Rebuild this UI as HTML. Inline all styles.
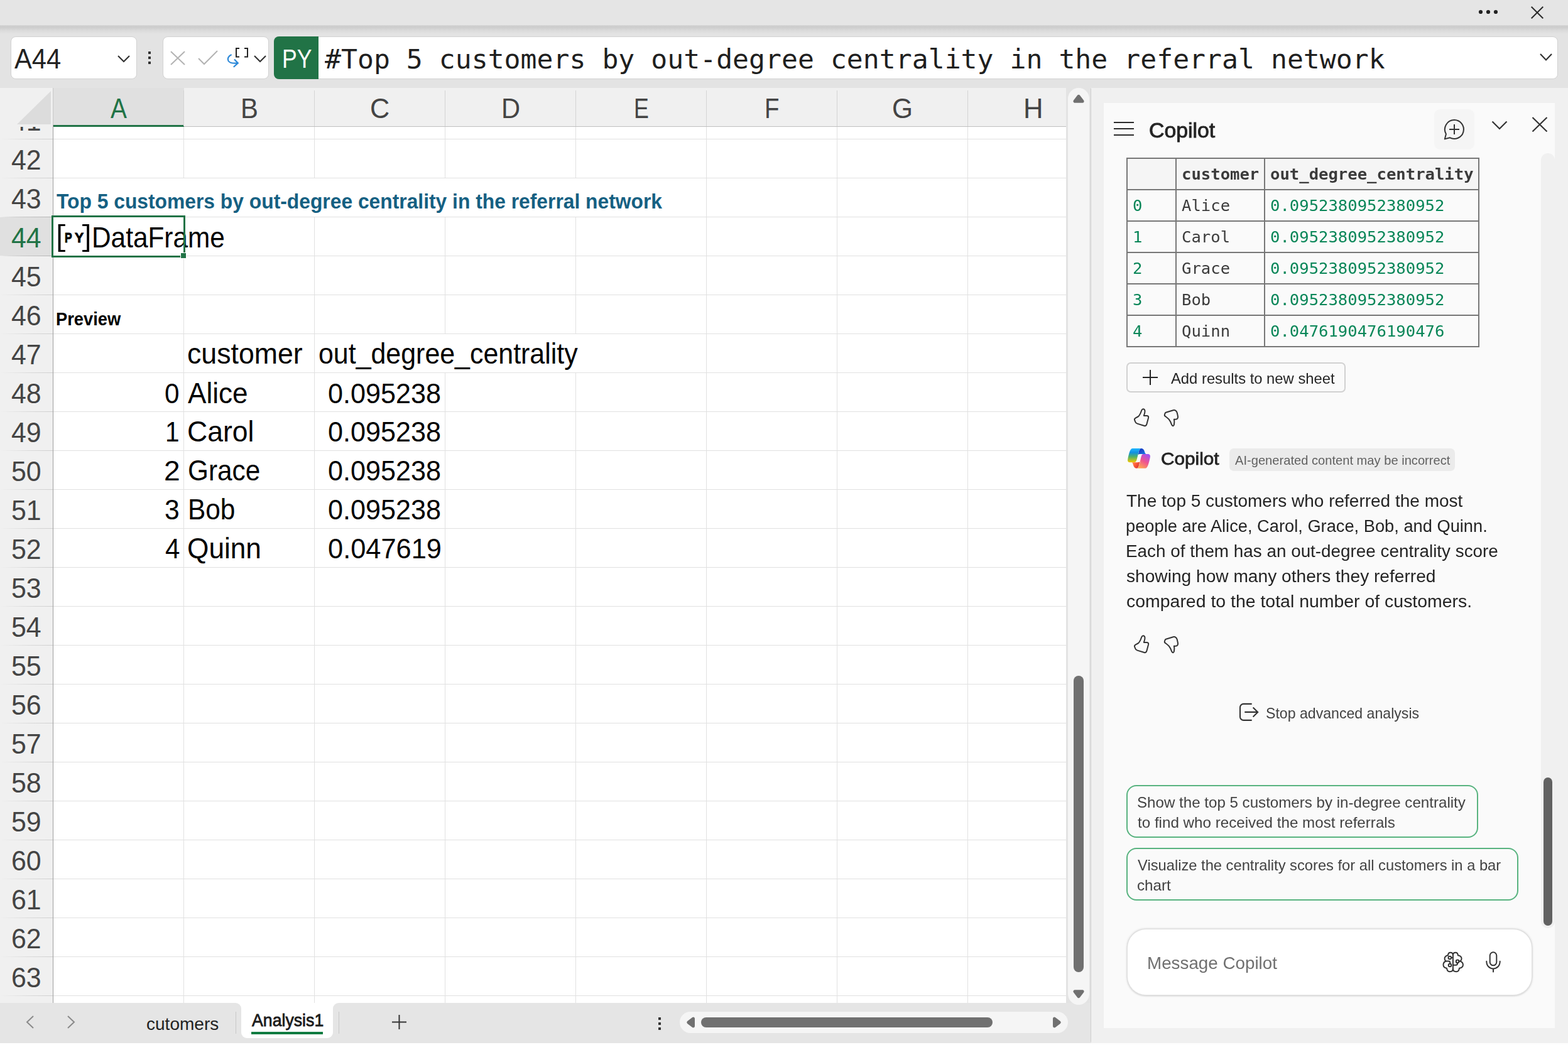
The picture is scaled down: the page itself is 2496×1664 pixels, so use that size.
<!DOCTYPE html>
<html lang="en"><head><meta charset="utf-8"><title>Excel - Copilot</title>
<style>
html,body{margin:0;padding:0}
body{width:2496px;height:1664px;position:relative;overflow:hidden;background:#f0f0f0;font-family:'Liberation Sans', sans-serif}
.t{position:absolute;white-space:pre;display:inline-block}
.r{position:absolute;box-sizing:border-box}
svg{position:absolute;overflow:visible}
</style></head><body>
<header aria-label="Title and formula bar">
<div class="r" style="left:0px;top:0px;width:2496px;height:40px;background:#e5e5e5;"></div>
<div class="r" style="left:0px;top:40px;width:2496px;height:100px;background:#e3e3e3;"></div>
<div class="r" style="left:0px;top:40px;width:2496px;height:14px;background:linear-gradient(#d8d8d8,#cccccc 14%,#cfcfcf 32%,#dbdbdb 62%,#e3e3e3);"></div>
<svg style="left:2350px;top:12px" width="40" height="14"><circle cx="7" cy="7" r="3.1" fill="#222"/><circle cx="19" cy="7" r="3.1" fill="#222"/><circle cx="31" cy="7" r="3.1" fill="#222"/></svg>
<svg style="left:2437px;top:10px" width="20" height="20"><path d="M0.7 0.7L19.3 19.3M19.3 0.7L0.7 19.3" stroke="#2b2b2b" stroke-width="2" fill="none"/></svg>
<div class="r" style="left:16.5px;top:58px;width:201px;height:67.5px;background:#fff;border:1px solid #d2d2d2;border-radius:8px"></div>
<span class="t" style="left:23.32px;transform-origin:0 50%;top:71.00px;font:400 45px/1 'Liberation Sans', sans-serif;color:#222;transform:scaleX(0.9254);">A44</span>
<svg style="left:187px;top:88px" width="20" height="12"><path d="M1 1L10 10L19 1" stroke="#333" stroke-width="2.2" fill="none"/></svg>
<div class="r" style="left:236px;top:82px;width:4.4px;height:4.2px;background:#333;"></div>
<div class="r" style="left:236px;top:90px;width:4.4px;height:4.2px;background:#333;"></div>
<div class="r" style="left:236px;top:98px;width:4.4px;height:4.2px;background:#333;"></div>
<div class="r" style="left:258.5px;top:58px;width:169px;height:67.5px;background:#fff;border:1px solid #d2d2d2;border-radius:8px"></div>
<svg style="left:271px;top:81px" width="24" height="23"><path d="M1 1L23 22M23 1L1 22" stroke="#b3b3b3" stroke-width="2" fill="none"/></svg>
<svg style="left:315px;top:80px" width="32" height="23"><path d="M1 13L10 22L31 1" stroke="#b3b3b3" stroke-width="2" fill="none"/></svg>
<svg style="left:360px;top:74px" width="40" height="36"><path d="M8.6 13C3.5 15 1.5 19.5 3.5 23C5.5 26 10 27.2 17.8 26.5M13 20.4L18.8 26.4L11.8 32.8" stroke="#2b88d8" stroke-width="2.2" fill="none"/><path d="M21 3.1H16V16.5H21M29 3.1H34V16.5H29" stroke="#222" stroke-width="2" fill="none"/></svg>
<svg style="left:404px;top:88px" width="20" height="12"><path d="M1 1L10 10L19 1" stroke="#333" stroke-width="2.2" fill="none"/></svg>
<div class="r" style="left:436px;top:58px;width:2044px;height:67.5px;background:#fff;border:1px solid #d2d2d2;border-radius:8px"></div>
<div class="r" style="left:436px;top:58px;width:71px;height:67.5px;background:#217346;border-radius:8px 0 0 8px"></div>
<span class="t" style="left:448.68px;transform-origin:0 50%;top:72.00px;font:400 43px/1 'Liberation Sans', sans-serif;color:#fff;transform:scaleX(0.8279);">PY</span>
<span class="t" style="left:517.46px;transform-origin:0 50%;top:73.00px;font:400 42.6px/1 'DejaVu Sans Mono', 'Liberation Mono', monospace;color:#1f1f1f;transform:scaleX(1.0125);">#Top 5 customers by out-degree centrality in the referral network</span>
<svg style="left:2451px;top:85px" width="20" height="12"><path d="M1 1L10 10.5L19 1" stroke="#333" stroke-width="2.2" fill="none"/></svg>
</header>
<main aria-label="Worksheet grid">
<div class="r" style="left:0px;top:140px;width:1697px;height:1457px;background:#fff;"></div>
<div class="r" style="left:0px;top:140px;width:1697px;height:62px;background:#f0f0f0;border-bottom:1px solid #bfbfbf"></div>
<svg style="left:0;top:140px" width="84" height="62"><path d="M81 5V58H27Z" fill="#dcdcdc"/></svg>
<div class="r" style="left:85px;top:140px;width:208px;height:62px;background:#e0e0e0;border-bottom:3px solid #217346"></div>
<span class="t" style="left:175.92px;transform-origin:0 50%;top:151.00px;font:400 44px/1 'Liberation Sans', sans-serif;color:#217346;transform:scaleX(0.8839);">A</span>
<span class="t" style="left:382.76px;transform-origin:0 50%;top:151.00px;font:400 44px/1 'Liberation Sans', sans-serif;color:#444;transform:scaleX(0.9518);">B</span>
<div class="r" style="left:292px;top:144px;width:1px;height:57px;background:#d4d4d4;"></div>
<span class="t" style="left:589.30px;transform-origin:0 50%;top:151.00px;font:400 44px/1 'Liberation Sans', sans-serif;color:#444;transform:scaleX(0.9831);">C</span>
<div class="r" style="left:500px;top:144px;width:1px;height:57px;background:#d4d4d4;"></div>
<span class="t" style="left:797.88px;transform-origin:0 50%;top:151.00px;font:400 44px/1 'Liberation Sans', sans-serif;color:#444;transform:scaleX(0.9476);">D</span>
<div class="r" style="left:708px;top:144px;width:1px;height:57px;background:#d4d4d4;"></div>
<span class="t" style="left:1008.97px;transform-origin:0 50%;top:151.00px;font:400 44px/1 'Liberation Sans', sans-serif;color:#444;transform:scaleX(0.8131);">E</span>
<div class="r" style="left:916px;top:144px;width:1px;height:57px;background:#d4d4d4;"></div>
<span class="t" style="left:1217.05px;transform-origin:0 50%;top:151.00px;font:400 44px/1 'Liberation Sans', sans-serif;color:#444;transform:scaleX(0.8736);">F</span>
<div class="r" style="left:1124px;top:144px;width:1px;height:57px;background:#d4d4d4;"></div>
<span class="t" style="left:1420.47px;transform-origin:0 50%;top:151.00px;font:400 44px/1 'Liberation Sans', sans-serif;color:#444;transform:scaleX(0.9640);">G</span>
<div class="r" style="left:1332px;top:144px;width:1px;height:57px;background:#d4d4d4;"></div>
<span class="t" style="left:1628.82px;transform-origin:0 50%;top:151.00px;font:400 44px/1 'Liberation Sans', sans-serif;color:#444;transform:scaleX(0.9925);">H</span>
<div class="r" style="left:1540px;top:144px;width:1px;height:57px;background:#d4d4d4;"></div>
<div class="r" style="left:0px;top:202px;width:84px;height:1395px;background:#f0f0f0;"></div>
<div class="r" style="left:0px;top:346px;width:84px;height:61px;background:#e0e0e0;"></div>
<div class="r" style="left:84px;top:140px;width:1px;height:1457px;background:#9e9e9e;"></div>
<div class="r" style="left:85px;top:221px;width:1612px;height:1px;background:#e1e1e1;"></div>
<div class="r" style="left:0px;top:221px;width:84px;height:1px;background:linear-gradient(90deg,rgba(214,214,214,0),#d8d8d8 60%,#cfcfcf);"></div>
<div class="r" style="left:85px;top:283px;width:1612px;height:1px;background:#e1e1e1;"></div>
<div class="r" style="left:0px;top:283px;width:84px;height:1px;background:linear-gradient(90deg,rgba(214,214,214,0),#d8d8d8 60%,#cfcfcf);"></div>
<div class="r" style="left:85px;top:345px;width:1612px;height:1px;background:#e1e1e1;"></div>
<div class="r" style="left:0px;top:345px;width:84px;height:1px;background:linear-gradient(90deg,rgba(214,214,214,0),#d8d8d8 60%,#cfcfcf);"></div>
<div class="r" style="left:85px;top:407px;width:1612px;height:1px;background:#e1e1e1;"></div>
<div class="r" style="left:0px;top:407px;width:84px;height:1px;background:linear-gradient(90deg,rgba(214,214,214,0),#d8d8d8 60%,#cfcfcf);"></div>
<div class="r" style="left:85px;top:469px;width:1612px;height:1px;background:#e1e1e1;"></div>
<div class="r" style="left:0px;top:469px;width:84px;height:1px;background:linear-gradient(90deg,rgba(214,214,214,0),#d8d8d8 60%,#cfcfcf);"></div>
<div class="r" style="left:85px;top:531px;width:1612px;height:1px;background:#e1e1e1;"></div>
<div class="r" style="left:0px;top:531px;width:84px;height:1px;background:linear-gradient(90deg,rgba(214,214,214,0),#d8d8d8 60%,#cfcfcf);"></div>
<div class="r" style="left:85px;top:593px;width:1612px;height:1px;background:#e1e1e1;"></div>
<div class="r" style="left:0px;top:593px;width:84px;height:1px;background:linear-gradient(90deg,rgba(214,214,214,0),#d8d8d8 60%,#cfcfcf);"></div>
<div class="r" style="left:85px;top:655px;width:1612px;height:1px;background:#e1e1e1;"></div>
<div class="r" style="left:0px;top:655px;width:84px;height:1px;background:linear-gradient(90deg,rgba(214,214,214,0),#d8d8d8 60%,#cfcfcf);"></div>
<div class="r" style="left:85px;top:717px;width:1612px;height:1px;background:#e1e1e1;"></div>
<div class="r" style="left:0px;top:717px;width:84px;height:1px;background:linear-gradient(90deg,rgba(214,214,214,0),#d8d8d8 60%,#cfcfcf);"></div>
<div class="r" style="left:85px;top:779px;width:1612px;height:1px;background:#e1e1e1;"></div>
<div class="r" style="left:0px;top:779px;width:84px;height:1px;background:linear-gradient(90deg,rgba(214,214,214,0),#d8d8d8 60%,#cfcfcf);"></div>
<div class="r" style="left:85px;top:841px;width:1612px;height:1px;background:#e1e1e1;"></div>
<div class="r" style="left:0px;top:841px;width:84px;height:1px;background:linear-gradient(90deg,rgba(214,214,214,0),#d8d8d8 60%,#cfcfcf);"></div>
<div class="r" style="left:85px;top:903px;width:1612px;height:1px;background:#e1e1e1;"></div>
<div class="r" style="left:0px;top:903px;width:84px;height:1px;background:linear-gradient(90deg,rgba(214,214,214,0),#d8d8d8 60%,#cfcfcf);"></div>
<div class="r" style="left:85px;top:965px;width:1612px;height:1px;background:#e1e1e1;"></div>
<div class="r" style="left:0px;top:965px;width:84px;height:1px;background:linear-gradient(90deg,rgba(214,214,214,0),#d8d8d8 60%,#cfcfcf);"></div>
<div class="r" style="left:85px;top:1027px;width:1612px;height:1px;background:#e1e1e1;"></div>
<div class="r" style="left:0px;top:1027px;width:84px;height:1px;background:linear-gradient(90deg,rgba(214,214,214,0),#d8d8d8 60%,#cfcfcf);"></div>
<div class="r" style="left:85px;top:1089px;width:1612px;height:1px;background:#e1e1e1;"></div>
<div class="r" style="left:0px;top:1089px;width:84px;height:1px;background:linear-gradient(90deg,rgba(214,214,214,0),#d8d8d8 60%,#cfcfcf);"></div>
<div class="r" style="left:85px;top:1151px;width:1612px;height:1px;background:#e1e1e1;"></div>
<div class="r" style="left:0px;top:1151px;width:84px;height:1px;background:linear-gradient(90deg,rgba(214,214,214,0),#d8d8d8 60%,#cfcfcf);"></div>
<div class="r" style="left:85px;top:1213px;width:1612px;height:1px;background:#e1e1e1;"></div>
<div class="r" style="left:0px;top:1213px;width:84px;height:1px;background:linear-gradient(90deg,rgba(214,214,214,0),#d8d8d8 60%,#cfcfcf);"></div>
<div class="r" style="left:85px;top:1275px;width:1612px;height:1px;background:#e1e1e1;"></div>
<div class="r" style="left:0px;top:1275px;width:84px;height:1px;background:linear-gradient(90deg,rgba(214,214,214,0),#d8d8d8 60%,#cfcfcf);"></div>
<div class="r" style="left:85px;top:1337px;width:1612px;height:1px;background:#e1e1e1;"></div>
<div class="r" style="left:0px;top:1337px;width:84px;height:1px;background:linear-gradient(90deg,rgba(214,214,214,0),#d8d8d8 60%,#cfcfcf);"></div>
<div class="r" style="left:85px;top:1399px;width:1612px;height:1px;background:#e1e1e1;"></div>
<div class="r" style="left:0px;top:1399px;width:84px;height:1px;background:linear-gradient(90deg,rgba(214,214,214,0),#d8d8d8 60%,#cfcfcf);"></div>
<div class="r" style="left:85px;top:1461px;width:1612px;height:1px;background:#e1e1e1;"></div>
<div class="r" style="left:0px;top:1461px;width:84px;height:1px;background:linear-gradient(90deg,rgba(214,214,214,0),#d8d8d8 60%,#cfcfcf);"></div>
<div class="r" style="left:85px;top:1523px;width:1612px;height:1px;background:#e1e1e1;"></div>
<div class="r" style="left:0px;top:1523px;width:84px;height:1px;background:linear-gradient(90deg,rgba(214,214,214,0),#d8d8d8 60%,#cfcfcf);"></div>
<div class="r" style="left:85px;top:1585px;width:1612px;height:1px;background:#e1e1e1;"></div>
<div class="r" style="left:0px;top:1585px;width:84px;height:1px;background:linear-gradient(90deg,rgba(214,214,214,0),#d8d8d8 60%,#cfcfcf);"></div>
<div class="r" style="left:292px;top:202px;width:1px;height:1395px;background:#e1e1e1;"></div>
<div class="r" style="left:500px;top:202px;width:1px;height:1395px;background:#e1e1e1;"></div>
<div class="r" style="left:708px;top:202px;width:1px;height:1395px;background:#e1e1e1;"></div>
<div class="r" style="left:916px;top:202px;width:1px;height:1395px;background:#e1e1e1;"></div>
<div class="r" style="left:1124px;top:202px;width:1px;height:1395px;background:#e1e1e1;"></div>
<div class="r" style="left:1332px;top:202px;width:1px;height:1395px;background:#e1e1e1;"></div>
<div class="r" style="left:1540px;top:202px;width:1px;height:1395px;background:#e1e1e1;"></div>
<div class="r" style="left:0px;top:345px;width:82px;height:1px;background:linear-gradient(90deg,rgba(190,190,190,0),#c6c6c6 45%,#b4b4b4);"></div>
<div class="r" style="left:0px;top:407px;width:82px;height:1px;background:linear-gradient(90deg,rgba(190,190,190,0),#c6c6c6 45%,#b4b4b4);"></div>
<span class="t" style="left:18.20px;transform-origin:0 50%;top:171.00px;font:400 44px/1 'Liberation Sans', sans-serif;color:#444;transform:scaleX(0.9744);">41</span>
<span class="t" style="left:18.20px;transform-origin:0 50%;top:233.00px;font:400 44px/1 'Liberation Sans', sans-serif;color:#444;transform:scaleX(0.9744);">42</span>
<span class="t" style="left:18.20px;transform-origin:0 50%;top:295.00px;font:400 44px/1 'Liberation Sans', sans-serif;color:#444;transform:scaleX(0.9744);">43</span>
<span class="t" style="left:18.20px;transform-origin:0 50%;top:357.00px;font:400 44px/1 'Liberation Sans', sans-serif;color:#217346;transform:scaleX(0.9744);">44</span>
<span class="t" style="left:18.20px;transform-origin:0 50%;top:419.00px;font:400 44px/1 'Liberation Sans', sans-serif;color:#444;transform:scaleX(0.9744);">45</span>
<span class="t" style="left:18.20px;transform-origin:0 50%;top:481.00px;font:400 44px/1 'Liberation Sans', sans-serif;color:#444;transform:scaleX(0.9744);">46</span>
<span class="t" style="left:18.20px;transform-origin:0 50%;top:543.00px;font:400 44px/1 'Liberation Sans', sans-serif;color:#444;transform:scaleX(0.9744);">47</span>
<span class="t" style="left:18.20px;transform-origin:0 50%;top:605.00px;font:400 44px/1 'Liberation Sans', sans-serif;color:#444;transform:scaleX(0.9744);">48</span>
<span class="t" style="left:18.20px;transform-origin:0 50%;top:667.00px;font:400 44px/1 'Liberation Sans', sans-serif;color:#444;transform:scaleX(0.9744);">49</span>
<span class="t" style="left:18.20px;transform-origin:0 50%;top:729.00px;font:400 44px/1 'Liberation Sans', sans-serif;color:#444;transform:scaleX(0.9744);">50</span>
<span class="t" style="left:18.20px;transform-origin:0 50%;top:791.00px;font:400 44px/1 'Liberation Sans', sans-serif;color:#444;transform:scaleX(0.9744);">51</span>
<span class="t" style="left:18.20px;transform-origin:0 50%;top:853.00px;font:400 44px/1 'Liberation Sans', sans-serif;color:#444;transform:scaleX(0.9744);">52</span>
<span class="t" style="left:18.20px;transform-origin:0 50%;top:915.00px;font:400 44px/1 'Liberation Sans', sans-serif;color:#444;transform:scaleX(0.9744);">53</span>
<span class="t" style="left:18.20px;transform-origin:0 50%;top:977.00px;font:400 44px/1 'Liberation Sans', sans-serif;color:#444;transform:scaleX(0.9744);">54</span>
<span class="t" style="left:18.20px;transform-origin:0 50%;top:1039.00px;font:400 44px/1 'Liberation Sans', sans-serif;color:#444;transform:scaleX(0.9744);">55</span>
<span class="t" style="left:18.20px;transform-origin:0 50%;top:1101.00px;font:400 44px/1 'Liberation Sans', sans-serif;color:#444;transform:scaleX(0.9744);">56</span>
<span class="t" style="left:18.20px;transform-origin:0 50%;top:1163.00px;font:400 44px/1 'Liberation Sans', sans-serif;color:#444;transform:scaleX(0.9744);">57</span>
<span class="t" style="left:18.20px;transform-origin:0 50%;top:1225.00px;font:400 44px/1 'Liberation Sans', sans-serif;color:#444;transform:scaleX(0.9744);">58</span>
<span class="t" style="left:18.20px;transform-origin:0 50%;top:1287.00px;font:400 44px/1 'Liberation Sans', sans-serif;color:#444;transform:scaleX(0.9744);">59</span>
<span class="t" style="left:18.20px;transform-origin:0 50%;top:1349.00px;font:400 44px/1 'Liberation Sans', sans-serif;color:#444;transform:scaleX(0.9744);">60</span>
<span class="t" style="left:18.20px;transform-origin:0 50%;top:1411.00px;font:400 44px/1 'Liberation Sans', sans-serif;color:#444;transform:scaleX(0.9744);">61</span>
<span class="t" style="left:18.20px;transform-origin:0 50%;top:1473.00px;font:400 44px/1 'Liberation Sans', sans-serif;color:#444;transform:scaleX(0.9744);">62</span>
<span class="t" style="left:18.20px;transform-origin:0 50%;top:1535.00px;font:400 44px/1 'Liberation Sans', sans-serif;color:#444;transform:scaleX(0.9744);">63</span>
<div class="r" style="left:0px;top:140px;width:84px;height:62px;background:#f0f0f0;"></div>
<svg style="left:0;top:140px" width="84" height="62"><path d="M81 5V58H27Z" fill="#dcdcdc"/></svg>
<div class="r" style="left:84px;top:140px;width:1px;height:59px;background:#c8c8c8;"></div>
<div class="r" style="left:85px;top:284px;width:1039px;height:61px;background:#fff;"></div>
<div class="r" style="left:501px;top:532px;width:416px;height:61px;background:#fff;"></div>
<span class="t" style="left:89.84px;transform-origin:0 50%;top:304.00px;font:700 33px/1 'Liberation Sans', sans-serif;color:#156082;transform:scaleX(0.9634);">Top 5 customers by out-degree centrality in the referral network</span>
<span class="t" style="left:146.13px;transform-origin:0 50%;top:356.00px;font:400 45.5px/1 'Liberation Sans', sans-serif;color:#000;transform:scaleX(0.9309);">DataFrame</span>
<svg style="left:0;top:0" width="160" height="410"><path d="M92.7 357.1H103.8V360H96.5V398H103.8V400.9H92.7ZM142 357.1H131.1V360H138.2V398H131.1V400.9H142Z" fill="#000"/></svg>
<span class="t" style="left:102.53px;transform-origin:0 50%;top:368.00px;font:700 22.3px/1 'Liberation Sans', sans-serif;color:#000;transform:scaleX(0.7844);-webkit-text-stroke:0.9px #000">P</span>
<span class="t" style="left:119.04px;transform-origin:0 50%;top:368.00px;font:700 22.3px/1 'Liberation Sans', sans-serif;color:#000;transform:scaleX(0.9551);-webkit-text-stroke:0.9px #000">Y</span>
<span class="t" style="left:88.97px;transform-origin:0 50%;top:493.00px;font:700 29.3px/1 'Liberation Sans', sans-serif;color:#000;transform:scaleX(0.9314);">Preview</span>
<span class="t" style="left:298.30px;transform-origin:0 50%;top:541.00px;font:400 45.5px/1 'Liberation Sans', sans-serif;color:#000;transform:scaleX(0.9819);">customer</span>
<span class="t" style="left:507.10px;transform-origin:0 50%;top:541.00px;font:400 45.5px/1 'Liberation Sans', sans-serif;color:#000;transform:scaleX(0.9430);">out_degree_centrality</span>
<span class="t" style="left:262.35px;transform-origin:0 50%;top:605.00px;font:400 44px/1 'Liberation Sans', sans-serif;color:#000;transform:scaleX(0.9598);">0</span>
<span class="t" style="left:299.01px;transform-origin:0 50%;top:604.00px;font:400 45.5px/1 'Liberation Sans', sans-serif;color:#000;transform:scaleX(0.9688);">Alice</span>
<span class="t" style="left:521.71px;transform-origin:0 50%;top:605.00px;font:400 44px/1 'Liberation Sans', sans-serif;color:#000;transform:scaleX(0.9805);">0.095238</span>
<span class="t" style="left:263.01px;transform-origin:0 50%;top:666.00px;font:400 44px/1 'Liberation Sans', sans-serif;color:#000;transform:scaleX(0.9218);">1</span>
<span class="t" style="left:298.34px;transform-origin:0 50%;top:665.00px;font:400 45.5px/1 'Liberation Sans', sans-serif;color:#000;transform:scaleX(0.9789);">Carol</span>
<span class="t" style="left:521.71px;transform-origin:0 50%;top:666.00px;font:400 44px/1 'Liberation Sans', sans-serif;color:#000;transform:scaleX(0.9805);">0.095238</span>
<span class="t" style="left:261.28px;transform-origin:0 50%;top:728.00px;font:400 44px/1 'Liberation Sans', sans-serif;color:#000;transform:scaleX(1.0469);">2</span>
<span class="t" style="left:299.07px;transform-origin:0 50%;top:727.00px;font:400 45.5px/1 'Liberation Sans', sans-serif;color:#000;transform:scaleX(0.9298);">Grace</span>
<span class="t" style="left:521.71px;transform-origin:0 50%;top:728.00px;font:400 44px/1 'Liberation Sans', sans-serif;color:#000;transform:scaleX(0.9805);">0.095238</span>
<span class="t" style="left:262.38px;transform-origin:0 50%;top:790.00px;font:400 44px/1 'Liberation Sans', sans-serif;color:#000;transform:scaleX(0.9677);">3</span>
<span class="t" style="left:299.22px;transform-origin:0 50%;top:789.00px;font:400 45.5px/1 'Liberation Sans', sans-serif;color:#000;transform:scaleX(0.9320);">Bob</span>
<span class="t" style="left:521.71px;transform-origin:0 50%;top:790.00px;font:400 44px/1 'Liberation Sans', sans-serif;color:#000;transform:scaleX(0.9805);">0.095238</span>
<span class="t" style="left:262.74px;transform-origin:0 50%;top:852.00px;font:400 44px/1 'Liberation Sans', sans-serif;color:#000;transform:scaleX(0.9556);">4</span>
<span class="t" style="left:298.21px;transform-origin:0 50%;top:851.00px;font:400 45.5px/1 'Liberation Sans', sans-serif;color:#000;transform:scaleX(0.9715);">Quinn</span>
<span class="t" style="left:521.71px;transform-origin:0 50%;top:852.00px;font:400 44px/1 'Liberation Sans', sans-serif;color:#000;transform:scaleX(0.9859);">0.047619</span>
<div class="r" style="left:82px;top:343px;width:213px;height:67px;background:transparent;border:3px solid #217346"></div>
<div class="r" style="left:287px;top:402px;width:10px;height:10px;background:#fff;"></div>
<div class="r" style="left:288px;top:403px;width:8px;height:8px;background:#217346;"></div>
</main>
<nav aria-label="Sheet tabs and scrollbars">
<div class="r" style="left:0px;top:1597px;width:1737px;height:67px;background:#e5e5e5;"></div>
<div class="r" style="left:374px;top:1597px;width:166px;height:10px;background:#fff;"></div>
<div class="r" style="left:364px;top:1597px;width:20px;height:20px;background:#e5e5e5;border-radius:0 9px 0 0"></div>
<div class="r" style="left:530px;top:1597px;width:20px;height:20px;background:#e5e5e5;border-radius:9px 0 0 0"></div>
<div class="r" style="left:384px;top:1597px;width:146px;height:56px;background:#fff;border-radius:0 0 9px 9px"></div>
<span class="t" style="left:233.31px;transform-origin:0 50%;top:1617.00px;font:400 28px/1 'Liberation Sans', sans-serif;color:#222;transform:scaleX(1.0013);">cutomers</span>
<span class="t" style="left:400.65px;transform-origin:0 50%;top:1611.00px;font:400 28px/1 'Liberation Sans', sans-serif;color:#1b1b1b;transform:scaleX(0.9534);-webkit-text-stroke:0.8px #1b1b1b">Analysis1</span>
<div class="r" style="left:400px;top:1643px;width:114px;height:4px;background:#107c41;"></div>
<div class="r" style="left:375px;top:1611px;width:1px;height:35px;background:#c8c8c8;"></div>
<div class="r" style="left:539px;top:1611px;width:1px;height:35px;background:#c8c8c8;"></div>
<svg style="left:41px;top:1617px" width="14" height="21"><path d="M12 1L2 10.5L12 20" stroke="#8a8a8a" stroke-width="2" fill="none"/></svg>
<svg style="left:106px;top:1617px" width="14" height="21"><path d="M2 1L12 10.5L2 20" stroke="#8a8a8a" stroke-width="2" fill="none"/></svg>
<svg style="left:624px;top:1616px" width="23" height="23"><path d="M11.5 0V23M0 11.5H23" stroke="#333" stroke-width="2" fill="none"/></svg>
<div class="r" style="left:1048px;top:1620px;width:4px;height:4px;background:#333;"></div>
<div class="r" style="left:1048px;top:1628px;width:4px;height:4px;background:#333;"></div>
<div class="r" style="left:1048px;top:1636px;width:4px;height:4px;background:#333;"></div>
<div class="r" style="left:1082px;top:1611px;width:618px;height:34px;background:#f5f5f5;border-radius:17px"></div>
<div class="r" style="left:1116px;top:1620px;width:464px;height:16px;background:#707070;border-radius:8px"></div>
<svg style="left:1092px;top:1619px" width="15" height="18"><path d="M11.6 3V15L3.7 9Z" fill="#707070" stroke="#707070" stroke-width="4.8" stroke-linejoin="round"/></svg>
<svg style="left:1675px;top:1619px" width="15" height="18"><path d="M3.4 3V15L11.3 9Z" fill="#707070" stroke="#707070" stroke-width="4.8" stroke-linejoin="round"/></svg>
<div class="r" style="left:1697px;top:140px;width:40px;height:1457px;background:#e3e3e3;"></div>
<div class="r" style="left:1700px;top:140px;width:34px;height:1460px;background:#f5f5f5;border-radius:17px"></div>
<div class="r" style="left:1709px;top:1076px;width:16px;height:472px;background:#707070;border-radius:8px"></div>
<svg style="left:1708px;top:150px" width="18" height="15"><path d="M2.9 11.2H15.1L9 3.3Z" fill="#707070" stroke="#707070" stroke-width="5" stroke-linejoin="round"/></svg>
<svg style="left:1708px;top:1575px" width="18" height="15"><path d="M2.9 3.8H15.1L9 11.7Z" fill="#707070" stroke="#707070" stroke-width="5" stroke-linejoin="round"/></svg>
<div class="r" style="left:1735.6px;top:141px;width:1.6px;height:1518px;background:linear-gradient(90deg,#d8d8d8,#c6c6c6);"></div>
</nav>
<aside aria-label="Copilot" style="position:absolute;left:0;top:0;width:0;height:0;will-change:transform">
<div class="r" style="left:1737px;top:140px;width:759px;height:1521px;background:#f0f0f0;"></div>
<div class="r" style="left:1757px;top:164px;width:718px;height:1473px;background:#fafafa;"></div>
<div class="r" style="left:1773px;top:194px;width:32px;height:2px;background:#2b2b2b;"></div>
<div class="r" style="left:1773px;top:204px;width:32px;height:2px;background:#2b2b2b;"></div>
<div class="r" style="left:1773px;top:214px;width:32px;height:2px;background:#2b2b2b;"></div>
<span class="t" style="left:1828.88px;transform-origin:0 50%;top:191.00px;font:400 33.5px/1 'Liberation Sans', sans-serif;color:#242424;transform:scaleX(1.0094);-webkit-text-stroke:0.9px #242424">Copilot</span>
<div class="r" style="left:2283px;top:174px;width:64px;height:64px;background:#f5f5f5;border-radius:9px"></div>
<svg style="left:2283px;top:174px" width="64" height="64"><path d="M32 17A15 15 0 1 1 24.8 45.2L16.8 47.4L18.9 39.4A15 15 0 0 1 32 17Z" stroke="#333" stroke-width="2" fill="none" stroke-linejoin="round"/><path d="M24 32H40M32 24V40" stroke="#333" stroke-width="2" fill="none"/></svg>
<svg style="left:2374px;top:192px" width="26" height="16"><path d="M1.5 1.5L13 13L24.5 1.5" stroke="#333" stroke-width="2.2" fill="none"/></svg>
<svg style="left:2438px;top:186px" width="26" height="25"><path d="M1.5 1L24.5 23.5M24.5 1L1.5 23.5" stroke="#333" stroke-width="2.2" fill="none"/></svg>
<div class="r" style="left:1793px;top:251px;width:562px;height:302px;background:#777;"></div>
<div class="r" style="left:1795px;top:253px;width:76px;height:48px;background:#f5f5f5;"></div>
<div class="r" style="left:1873px;top:253px;width:139px;height:48px;background:#f5f5f5;"></div>
<div class="r" style="left:2014px;top:253px;width:339px;height:48px;background:#f5f5f5;"></div>
<div class="r" style="left:1795px;top:303px;width:76px;height:48px;background:#fafafa;"></div>
<div class="r" style="left:1873px;top:303px;width:139px;height:48px;background:#fafafa;"></div>
<div class="r" style="left:2014px;top:303px;width:339px;height:48px;background:#fafafa;"></div>
<div class="r" style="left:1795px;top:353px;width:76px;height:48px;background:#fafafa;"></div>
<div class="r" style="left:1873px;top:353px;width:139px;height:48px;background:#fafafa;"></div>
<div class="r" style="left:2014px;top:353px;width:339px;height:48px;background:#fafafa;"></div>
<div class="r" style="left:1795px;top:403px;width:76px;height:48px;background:#fafafa;"></div>
<div class="r" style="left:1873px;top:403px;width:139px;height:48px;background:#fafafa;"></div>
<div class="r" style="left:2014px;top:403px;width:339px;height:48px;background:#fafafa;"></div>
<div class="r" style="left:1795px;top:453px;width:76px;height:48px;background:#fafafa;"></div>
<div class="r" style="left:1873px;top:453px;width:139px;height:48px;background:#fafafa;"></div>
<div class="r" style="left:2014px;top:453px;width:339px;height:48px;background:#fafafa;"></div>
<div class="r" style="left:1795px;top:503px;width:76px;height:48px;background:#fafafa;"></div>
<div class="r" style="left:1873px;top:503px;width:139px;height:48px;background:#fafafa;"></div>
<div class="r" style="left:2014px;top:503px;width:339px;height:48px;background:#fafafa;"></div>
<span class="t" style="left:1881.00px;transform-origin:0 50%;top:265.00px;font:700 25.6px/1 'DejaVu Sans Mono', 'Liberation Mono', monospace;color:#3b3b3b;">customer</span>
<span class="t" style="left:2022.00px;transform-origin:0 50%;top:265.00px;font:700 25.6px/1 'DejaVu Sans Mono', 'Liberation Mono', monospace;color:#3b3b3b;">out_degree_centrality</span>
<span class="t" style="left:1803.00px;transform-origin:0 50%;top:315.00px;font:400 25.6px/1 'DejaVu Sans Mono', 'Liberation Mono', monospace;color:#098658;">0</span>
<span class="t" style="left:1881.00px;transform-origin:0 50%;top:315.00px;font:400 25.6px/1 'DejaVu Sans Mono', 'Liberation Mono', monospace;color:#3b3b3b;">Alice</span>
<span class="t" style="left:2022.00px;transform-origin:0 50%;top:315.00px;font:400 25.6px/1 'DejaVu Sans Mono', 'Liberation Mono', monospace;color:#098658;">0.0952380952380952</span>
<span class="t" style="left:1803.00px;transform-origin:0 50%;top:365.00px;font:400 25.6px/1 'DejaVu Sans Mono', 'Liberation Mono', monospace;color:#098658;">1</span>
<span class="t" style="left:1881.00px;transform-origin:0 50%;top:365.00px;font:400 25.6px/1 'DejaVu Sans Mono', 'Liberation Mono', monospace;color:#3b3b3b;">Carol</span>
<span class="t" style="left:2022.00px;transform-origin:0 50%;top:365.00px;font:400 25.6px/1 'DejaVu Sans Mono', 'Liberation Mono', monospace;color:#098658;">0.0952380952380952</span>
<span class="t" style="left:1803.00px;transform-origin:0 50%;top:415.00px;font:400 25.6px/1 'DejaVu Sans Mono', 'Liberation Mono', monospace;color:#098658;">2</span>
<span class="t" style="left:1881.00px;transform-origin:0 50%;top:415.00px;font:400 25.6px/1 'DejaVu Sans Mono', 'Liberation Mono', monospace;color:#3b3b3b;">Grace</span>
<span class="t" style="left:2022.00px;transform-origin:0 50%;top:415.00px;font:400 25.6px/1 'DejaVu Sans Mono', 'Liberation Mono', monospace;color:#098658;">0.0952380952380952</span>
<span class="t" style="left:1803.00px;transform-origin:0 50%;top:465.00px;font:400 25.6px/1 'DejaVu Sans Mono', 'Liberation Mono', monospace;color:#098658;">3</span>
<span class="t" style="left:1881.00px;transform-origin:0 50%;top:465.00px;font:400 25.6px/1 'DejaVu Sans Mono', 'Liberation Mono', monospace;color:#3b3b3b;">Bob</span>
<span class="t" style="left:2022.00px;transform-origin:0 50%;top:465.00px;font:400 25.6px/1 'DejaVu Sans Mono', 'Liberation Mono', monospace;color:#098658;">0.0952380952380952</span>
<span class="t" style="left:1803.00px;transform-origin:0 50%;top:515.00px;font:400 25.6px/1 'DejaVu Sans Mono', 'Liberation Mono', monospace;color:#098658;">4</span>
<span class="t" style="left:1881.00px;transform-origin:0 50%;top:515.00px;font:400 25.6px/1 'DejaVu Sans Mono', 'Liberation Mono', monospace;color:#3b3b3b;">Quinn</span>
<span class="t" style="left:2022.00px;transform-origin:0 50%;top:515.00px;font:400 25.6px/1 'DejaVu Sans Mono', 'Liberation Mono', monospace;color:#098658;">0.0476190476190476</span>
<div class="r" style="left:1793px;top:577px;width:349px;height:48px;background:#fafafa;border:2px solid #d1d1d1;border-radius:7px"></div>
<svg style="left:1819px;top:589px" width="24" height="24"><path d="M12 0V24M0 12H24" stroke="#242424" stroke-width="2" fill="none"/></svg>
<span class="t" style="left:1863.95px;transform-origin:0 50%;top:591.00px;font:400 24px/1 'Liberation Sans', sans-serif;color:#242424;transform:scaleX(0.9916);">Add results to new sheet</span>
<svg style="left:1790px;top:640px" width="100" height="50"><path d="M29.8 11.3C32 11.5 32.8 13.5 32.4 16C32.2 18.5 31.5 20 30.8 21.9L35.3 21.9C37.3 21.9 38.6 23 38.1 25.2L35.5 35C34.8 37.5 33.5 38.6 31.5 38L20.5 34.6C18.5 34 17.6 33 17 31.2L16 28.3C15.5 26.8 16.5 26.2 18 25.4L21.5 23.5C23 22.7 24.5 20 25.5 17.9L27.4 13.2C27.9 12 28.6 11.3 29.8 11.3Z" stroke="#333" stroke-width="2" fill="none" stroke-linejoin="round"/><path d="M66 16.8L77.5 13.3C80.5 12.6 83 14 83.8 17.5L85 23C85.5 25.8 84 27.6 81.5 27.7L78.9 27.8C79.6 31 79.6 34 78.8 36.6C78.3 38.4 76.6 38.8 75.6 37C74.6 35.4 74 33.3 73 31.3C71.5 28.3 69.5 26 66.5 24C64 22.6 63.4 21.8 63.8 20.5L64.6 18.2C64.9 17.3 65.3 17 66 16.8Z" stroke="#333" stroke-width="2" fill="none" stroke-linejoin="round"/></svg>
<svg style="left:1790px;top:1001px" width="100" height="50"><path d="M29.8 11.3C32 11.5 32.8 13.5 32.4 16C32.2 18.5 31.5 20 30.8 21.9L35.3 21.9C37.3 21.9 38.6 23 38.1 25.2L35.5 35C34.8 37.5 33.5 38.6 31.5 38L20.5 34.6C18.5 34 17.6 33 17 31.2L16 28.3C15.5 26.8 16.5 26.2 18 25.4L21.5 23.5C23 22.7 24.5 20 25.5 17.9L27.4 13.2C27.9 12 28.6 11.3 29.8 11.3Z" stroke="#333" stroke-width="2" fill="none" stroke-linejoin="round"/><path d="M66 16.8L77.5 13.3C80.5 12.6 83 14 83.8 17.5L85 23C85.5 25.8 84 27.6 81.5 27.7L78.9 27.8C79.6 31 79.6 34 78.8 36.6C78.3 38.4 76.6 38.8 75.6 37C74.6 35.4 74 33.3 73 31.3C71.5 28.3 69.5 26 66.5 24C64 22.6 63.4 21.8 63.8 20.5L64.6 18.2C64.9 17.3 65.3 17 66 16.8Z" stroke="#333" stroke-width="2" fill="none" stroke-linejoin="round"/></svg>
<svg style="left:1785px;top:705px" width="60" height="50"><defs>
<linearGradient id="ga" x1="0" y1="0" x2="0" y2="1"><stop offset="0" stop-color="#1fb6ff"/><stop offset=".3" stop-color="#1090e0"/><stop offset=".6" stop-color="#4fb267"/><stop offset="1" stop-color="#f5c800"/></linearGradient>
<linearGradient id="gb" x1="0" y1="0" x2="1" y2="1"><stop offset="0" stop-color="#0a2cc0"/><stop offset=".5" stop-color="#1d55d0"/><stop offset="1" stop-color="#0a88ea"/></linearGradient>
<linearGradient id="gc" x1=".8" y1="0" x2=".25" y2="1"><stop offset="0" stop-color="#a052f5"/><stop offset=".5" stop-color="#ef5590"/><stop offset="1" stop-color="#ffa850"/></linearGradient>
<linearGradient id="gd" x1="0" y1="0" x2="1" y2=".6"><stop offset="0" stop-color="#ff8f50"/><stop offset=".5" stop-color="#ff6038"/><stop offset="1" stop-color="#d83232"/></linearGradient></defs>
<path d="M31 9C34.5 9 36 11 36.8 13.5C37.6 16 38 17.5 39.5 17.9H30C28.5 17.9 27.5 18.3 26.8 19L27.5 15.5C28.3 12 29.3 9.5 31 9Z" fill="url(#gb)"/>
<path d="M18 9H31C29 9.5 28 13 27 17L24.5 27C23.8 29.8 22.5 31.2 20 31.2H13.5C10.8 31.2 9.6 29.5 10.2 26.5C11 22 12 17 13.5 13.5C14.5 11 16 9 18 9Z" fill="url(#ga)"/>
<path d="M16.8 31.3H24C26.5 31.3 28 31 29.2 30.5L28.5 34C27.7 37.5 26.8 40.3 25 40.8C21.5 40.8 20 38.8 19.2 36.3C18.4 33.8 18 31.8 16.8 31.3Z" fill="url(#gd)"/>
<path d="M35 18H42C45 18 46.5 20 45.8 23C45 27.5 43.8 32.5 42.3 36.3C41.2 39 40 40.8 38 40.8H25C27 40.3 28 37 29 33L31.5 22.5C32.3 19.5 33 18 35 18Z" fill="url(#gc)"/>
</svg>
<span class="t" style="left:1848.39px;transform-origin:0 50%;top:717.00px;font:400 28px/1 'Liberation Sans', sans-serif;color:#242424;transform:scaleX(1.0626);-webkit-text-stroke:0.8px #242424">Copilot</span>
<div class="r" style="left:1957px;top:714px;width:359px;height:36px;background:#ebebeb;border-radius:7px"></div>
<span class="t" style="left:1965.76px;transform-origin:0 50%;top:723.00px;font:400 20.3px/1 'Liberation Sans', sans-serif;color:#616161;transform:scaleX(0.9925);">AI-generated content may be incorrect</span>
<span class="t" style="left:1793.37px;transform-origin:0 50%;top:785.00px;font:400 27px/1 'Liberation Sans', sans-serif;color:#242424;transform:scaleX(1.0370);">The top 5 customers who referred the most</span>
<span class="t" style="left:1792.24px;transform-origin:0 50%;top:825.00px;font:400 27px/1 'Liberation Sans', sans-serif;color:#242424;transform:scaleX(1.0095);">people are Alice, Carol, Grace, Bob, and Quinn.</span>
<span class="t" style="left:1791.72px;transform-origin:0 50%;top:865.00px;font:400 27px/1 'Liberation Sans', sans-serif;color:#242424;transform:scaleX(1.0313);">Each of them has an out-degree centrality score</span>
<span class="t" style="left:1793.22px;transform-origin:0 50%;top:905.00px;font:400 27px/1 'Liberation Sans', sans-serif;color:#242424;transform:scaleX(1.0418);">showing how many others they referred</span>
<span class="t" style="left:1792.79px;transform-origin:0 50%;top:945.00px;font:400 27px/1 'Liberation Sans', sans-serif;color:#242424;transform:scaleX(1.0535);">compared to the total number of customers.</span>
<svg style="left:1960px;top:1105px" width="60" height="60"><path d="M32.7 15.9H19.5A5.5 5.5 0 0 0 14 21.4V36.4A5.5 5.5 0 0 0 19.5 41.9H32.7" stroke="#333" stroke-width="2.1" fill="none"/><path d="M21.3 28.9H42M34.6 21.5L42.2 28.9L34.6 36.4" stroke="#333" stroke-width="2.1" fill="none"/></svg>
<span class="t" style="left:2015.05px;transform-origin:0 50%;top:1124.00px;font:400 24px/1 'Liberation Sans', sans-serif;color:#424242;transform:scaleX(0.9629);">Stop advanced analysis</span>
<div class="r" style="left:1793px;top:1250px;width:560px;height:84px;background:#fafafa;border:2.2px solid #58b37f;border-radius:16px"></div>
<span class="t" style="left:1810.20px;transform-origin:0 50%;top:1266.00px;font:400 24px/1 'Liberation Sans', sans-serif;color:#424242;transform:scaleX(1.0050);">Show the top 5 customers by in-degree centrality</span>
<span class="t" style="left:1810.93px;transform-origin:0 50%;top:1298.00px;font:400 24px/1 'Liberation Sans', sans-serif;color:#424242;transform:scaleX(1.0073);">to find who received the most referrals</span>
<div class="r" style="left:1793px;top:1350px;width:624px;height:84px;background:#fafafa;border:2.2px solid #58b37f;border-radius:16px"></div>
<span class="t" style="left:1811.20px;transform-origin:0 50%;top:1366.00px;font:400 24px/1 'Liberation Sans', sans-serif;color:#424242;transform:scaleX(0.9881);">Visualize the centrality scores for all customers in a bar</span>
<span class="t" style="left:1810.27px;transform-origin:0 50%;top:1398.00px;font:400 24px/1 'Liberation Sans', sans-serif;color:#424242;transform:scaleX(1.0084);">chart</span>
<div class="r" style="left:1794.5px;top:1480px;width:643px;height:104px;background:#fff;border-radius:29px;box-shadow:0 0 0 1.5px #e0e0e0,0 0 3px 1.5px rgba(0,0,0,0.09),0 2px 3px rgba(0,0,0,0.10)"></div>
<span class="t" style="left:1826.32px;transform-origin:0 50%;top:1520.00px;font:400 28px/1 'Liberation Sans', sans-serif;color:#707070;transform:scaleX(0.9924);">Message Copilot</span>
<svg style="left:2285px;top:1500px" width="120" height="65" fill="none" stroke="#333" stroke-width="2" stroke-linecap="round">
<path d="M27.8 20.5C27.8 18 25.8 16.8 23.8 16.8C21.5 16.8 20.2 18.5 19.9 21.2C16.5 21.8 14.6 24 14.6 26.6C14.6 28.5 15.5 29.8 16.6 30.5C14 31.5 12.5 33.8 12.5 36.3C12.5 39.3 14.8 41.3 18 41.8C18.5 45 20.2 47.2 22.8 47.2C25.8 47.2 27.8 45.5 27.8 43"/>
<path d="M27.9 19V45"/>
<path d="M28 20.5C28 18 30 16.8 32 16.8C34.3 16.8 35.6 18.5 35.9 21.2C39.3 21.8 41.6 24 41.6 26.6C41.6 28.5 40.5 29.8 39.4 30.5C42 31.5 43.9 33.8 43.9 36.3C43.9 39.3 41.4 41.3 38 41.8C37.5 45 35.6 47.2 33.2 47.2C30 47.2 28 45.5 28 43"/>
<path d="M16.6 30.5H21C22.5 30.5 23.3 31.5 23.3 33V34.6"/><circle cx="23" cy="37" r="2.3"/><circle cx="22.8" cy="25" r="2.3"/><path d="M25.1 25H27.8"/><circle cx="35.1" cy="30.9" r="2.3"/><path d="M37.4 30.6L39.4 30.4M35.1 33.2V34C35.1 35.8 34 36.7 32.5 36.7H28"/>
<rect x="86.7" y="16.3" width="10.6" height="21" rx="5.3"/><path d="M81.3 30.8C81.3 38 86 42.4 92 42.4C98 42.4 102.7 38 102.7 30.8M92 42.4V47.5"/>
</svg>
<div class="r" style="left:2453px;top:244px;width:22px;height:1234px;background:#f0f0f0;border-radius:11px"></div>
<div class="r" style="left:2457px;top:1238px;width:14px;height:236px;background:#616161;border-radius:7px"></div>
</aside>
<div class="r" style="left:0px;top:1661px;width:2496px;height:3px;background:#fefefe;"></div>
</body></html>
